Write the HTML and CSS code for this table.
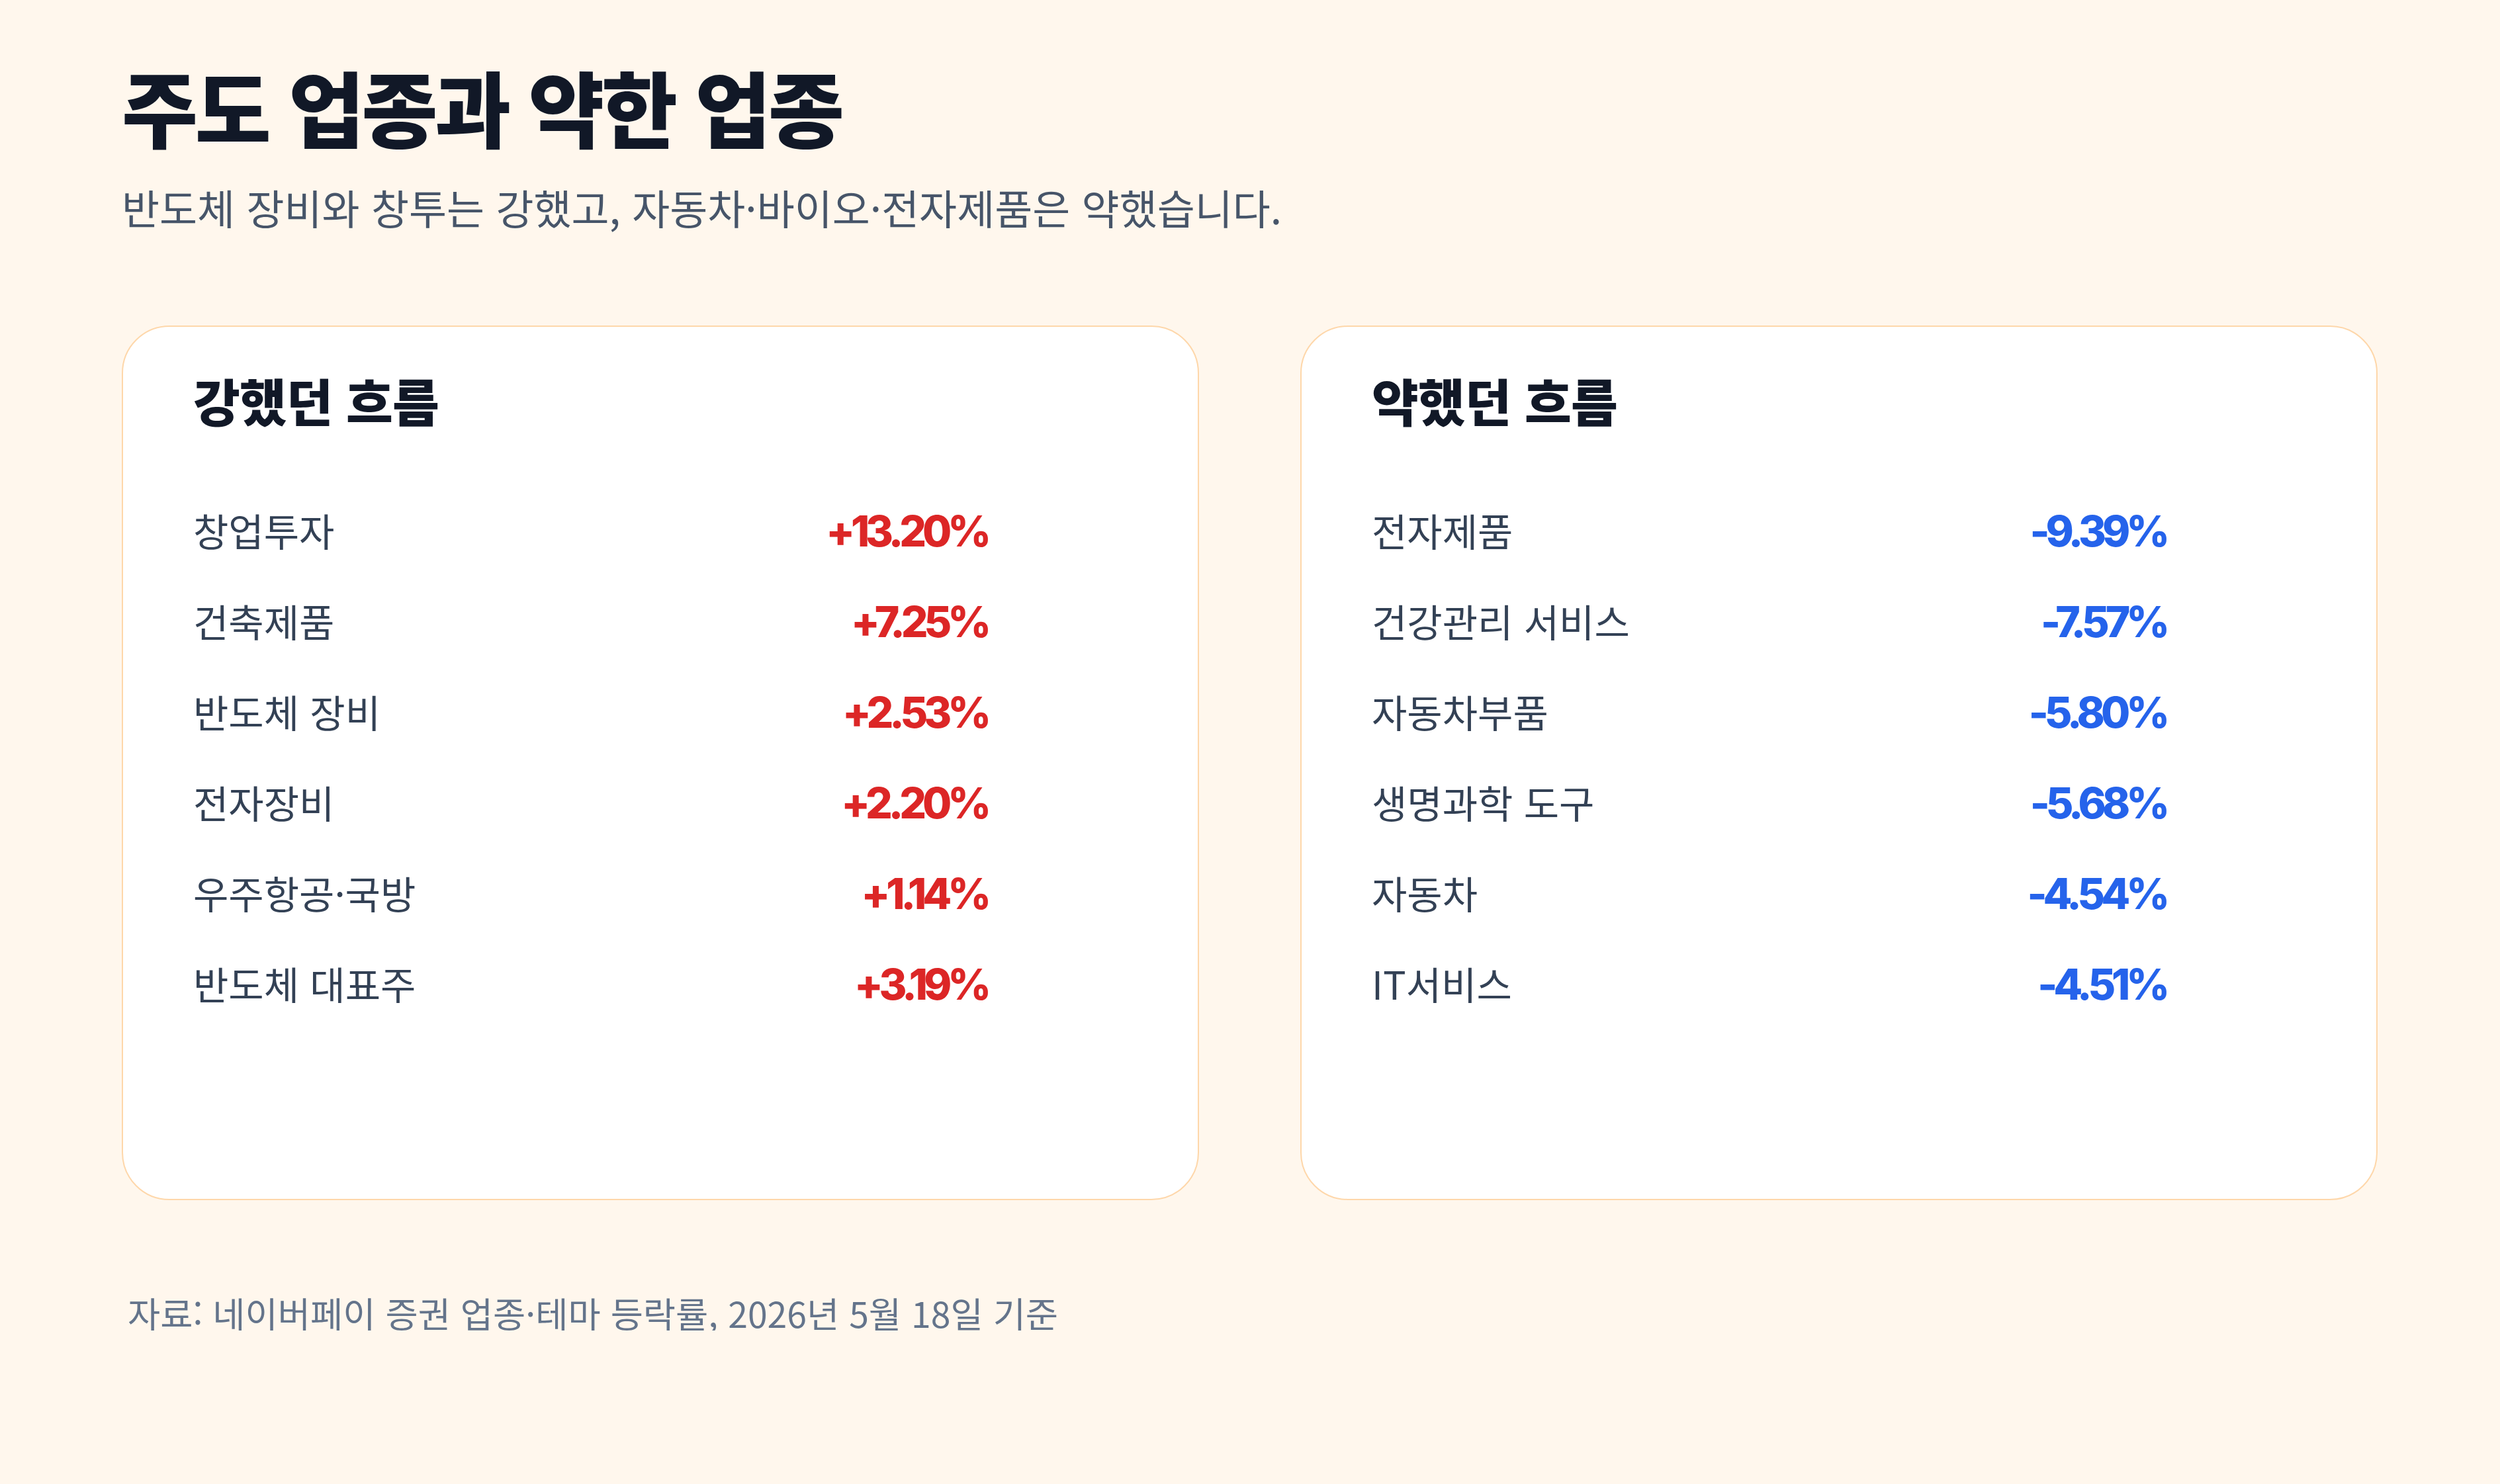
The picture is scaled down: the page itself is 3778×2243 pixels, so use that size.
FILE: index.html
```html
<!DOCTYPE html>
<html lang="ko">
<head>
<meta charset="utf-8">
<title>주도 업종과 약한 업종</title>
<link rel="stylesheet" href="styles.css">
</head>
<body>
<main class="page">
  <header class="head">
    <h1 class="title">주도 업종과 약한 업종</h1>
    <p class="subtitle">반도체 장비와 창투는 강했고, 자동차·바이오·전자제품은 약했습니다.</p>
  </header>
  <section class="cards">
    <article class="card">
      <h2 class="card-title">강했던 흐름</h2>
      <ul class="rows">
        <li class="row"><span class="label">창업투자</span><span class="value up">+13.20%</span></li>
        <li class="row"><span class="label">건축제품</span><span class="value up">+7.25%</span></li>
        <li class="row"><span class="label">반도체 장비</span><span class="value up">+2.53%</span></li>
        <li class="row"><span class="label">전자장비</span><span class="value up">+2.20%</span></li>
        <li class="row"><span class="label">우주항공·국방</span><span class="value up">+1.14%</span></li>
        <li class="row"><span class="label">반도체 대표주</span><span class="value up">+3.19%</span></li>
      </ul>
    </article>
    <article class="card">
      <h2 class="card-title">약했던 흐름</h2>
      <ul class="rows">
        <li class="row"><span class="label">전자제품</span><span class="value down">-9.39%</span></li>
        <li class="row"><span class="label">건강관리 서비스</span><span class="value down">-7.57%</span></li>
        <li class="row"><span class="label">자동차부품</span><span class="value down">-5.80%</span></li>
        <li class="row"><span class="label">생명과학 도구</span><span class="value down">-5.68%</span></li>
        <li class="row"><span class="label">자동차</span><span class="value down">-4.54%</span></li>
        <li class="row"><span class="label">IT서비스</span><span class="value down">-4.51%</span></li>
      </ul>
    </article>
  </section>
  <footer class="source">자료: 네이버페이 증권 업종·테마 등락률, 2026년 5월 18일 기준</footer>
</main>
</body>
</html>
```
FILE: styles.css
```css
* { box-sizing: border-box; }
body {
  margin: 0;
  background: #fff7ed;
  font-family: "Noto Sans CJK KR", "Noto Sans", sans-serif;
  color: #111827;
}
.page {
  padding: 97px 185px 0 184px;
}
.title {
  margin: 0;
  font-size: 125px;
  line-height: 1;
  font-weight: 900;
  letter-spacing: -0.035em;
  color: #111827;
}
.subtitle {
  margin: 60px 0 0;
  font-size: 62px;
  line-height: 1;
  font-weight: 400;
  color: #475569;
}
.cards {
  margin-top: 148px;
  display: grid;
  grid-template-columns: 1fr 1fr;
  gap: 153px;
}
.card {
  background: #ffffff;
  border: 2px solid #fed7aa;
  border-radius: 72px;
  padding: 72px 106px;
  min-height: 1322px;
}
.card-title {
  margin: 0;
  font-size: 77px;
  line-height: 1;
  font-weight: 900;
  letter-spacing: -0.01em;
  color: #111827;
}
.rows {
  list-style: none;
  margin: 128px 0 0;
  padding: 0;
  max-width: 1200px;
}
.row {
  display: flex;
  justify-content: space-between;
  align-items: baseline;
  height: 137px;
}
.label {
  font-size: 58px;
  line-height: 1;
  font-weight: 400;
  color: #334155;
}
.value {
  font-family: Inter, "Noto Sans CJK KR", sans-serif;
  font-size: 64px;
  line-height: 1;
  font-weight: 800;
  letter-spacing: -0.095em;
}
.up { color: #dc2626; }
.down { color: #2563eb; }
.source {
  margin-top: 143px;
  padding-left: 9px;
  font-size: 53.5px;
  line-height: 1;
  color: #64748b;
}
```
